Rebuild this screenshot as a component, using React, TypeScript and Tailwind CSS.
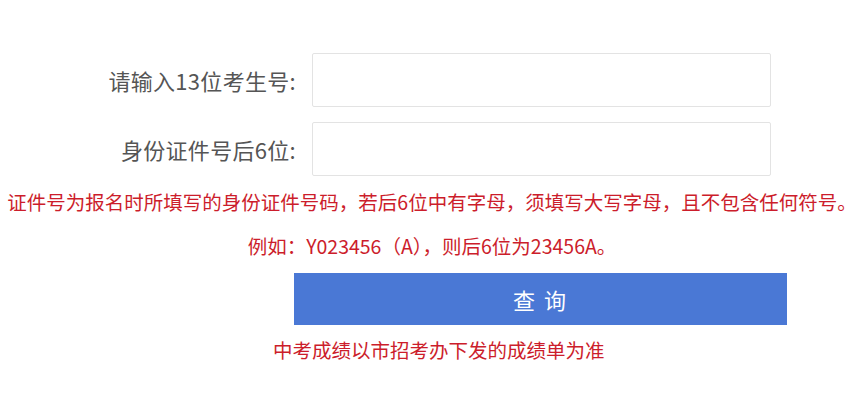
const FONT = { fontFamily: '"Microsoft YaHei", "Noto Sans CJK SC", "Noto Sans", sans-serif' };

const Field = ({ label }: { label: string }) => (
  <div className="flex items-center">
    <label className="w-[300px] shrink-0 pr-[4px] text-right text-[22px] tracking-[0.3px] text-[#555555]">{label}</label>
    <input
      type="text"
      className="ml-[12px] h-[54px] w-[459px] rounded-[2px] border border-[#e3e3e3] bg-white px-3 outline-none"
    />
  </div>
);

export default function App() {
  return (
    <div className="h-[408px] w-[864px] bg-white pt-[53px]" style={FONT}>
      <div className="flex flex-col gap-[15px]">
        <Field label="请输入13位考生号:" />
        <Field label="身份证件号后6位:" />
      </div>

      <p className="mt-[13px] text-center text-[19.5px] leading-[26px] text-[#cc1d2b]">
        证件号为报名时所填写的身份证件号码，若后6位中有字母，须填写大写字母，且不包含任何符号。
      </p>
      <p className="mt-[18px] text-center text-[19.5px] leading-[26px] text-[#cc1d2b]">
        例如：Y023456（A），则后6位为23456A。
      </p>

      <div className="mt-[14px] pl-[294px]">
        <button
          type="button"
          className="h-[52px] w-[493px] bg-[#4a78d5] text-[22px] tracking-[2px] text-white"
        >
          查 询
        </button>
        <p className="-ml-[21px] mt-[12px] text-[19.5px] leading-[26px] text-[#cc1d2b]">
          中考成绩以市招考办下发的成绩单为准
        </p>
      </div>
    </div>
  );
}
